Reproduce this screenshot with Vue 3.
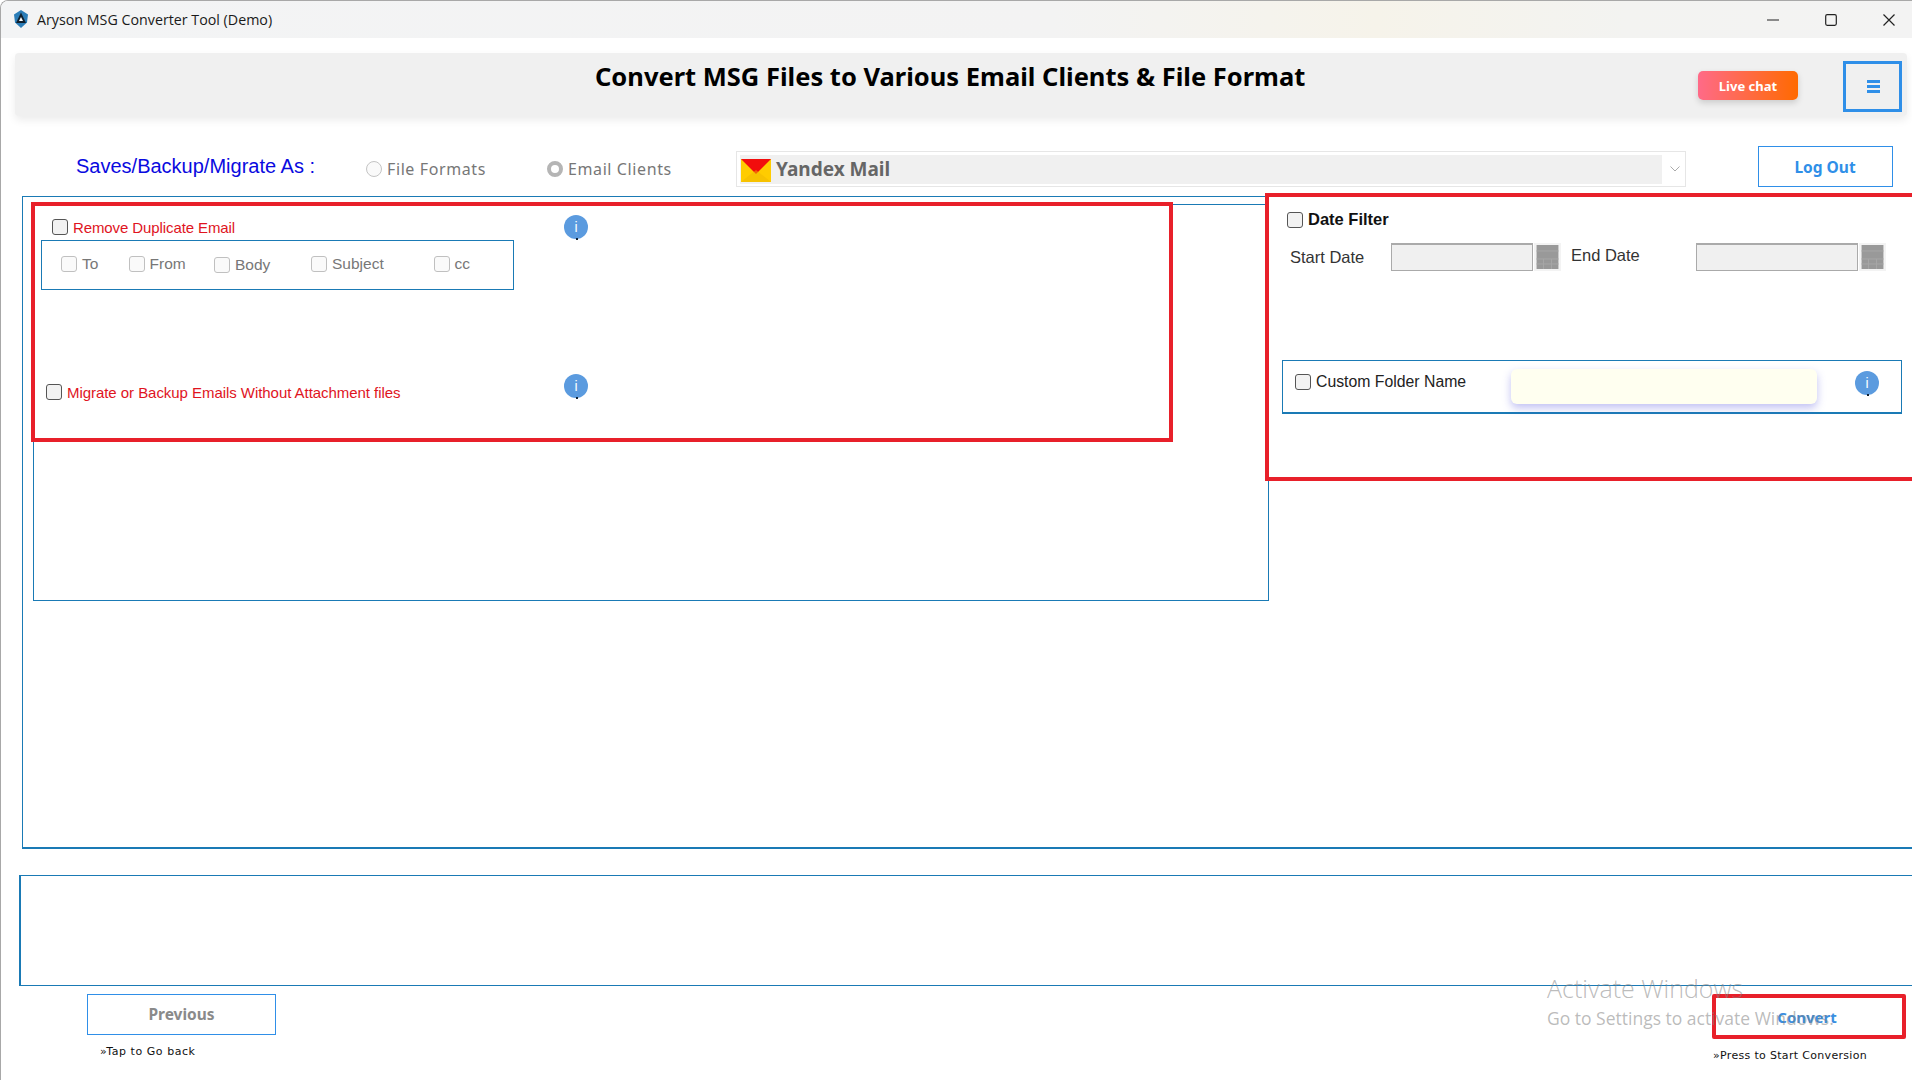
<template>
  <div class="window">
    <!-- title bar -->
    <div class="titlebar">
      <svg class="app-logo" viewBox="0 0 16 18">
        <path d="M8 0l7 4.500-1 8L8 18l-6-5.500-1-8z" fill="#2b7db8" />
        <path d="M8 2.500L13 13H3z" fill="#10202e" />
        <path d="M8 7l2 4H6z" fill="#fff" />
      </svg>
      <span class="app-title">Aryson MSG Converter Tool (Demo)</span>
      <div class="win-controls">
        <svg viewBox="0 0 12 12" class="win-icon"><path d="M0 6h12" /></svg>
        <svg viewBox="0 0 12 12" class="win-icon"><rect x="0.700" y="0.700" width="10.600" height="10.600" rx="1.500" /></svg>
        <svg viewBox="0 0 12 12" class="win-icon"><path d="M0.500 0.500l11 11M11.500 0.500l-11 11" /></svg>
      </div>
    </div>

    <!-- heading card -->
    <div class="head-card">
      <h1 class="head-title">Convert MSG Files to Various Email Clients &amp; File Format</h1>
      <button class="live-chat">Live chat</button>
      <button class="menu-btn">
        <svg viewBox="0 0 13 13" width="13" height="13">
          <path d="M0 0h13v3H0zM0 5h13v3H0zM0 10h13v3H0z" fill="#2f8fe8" />
        </svg>
      </button>
    </div>

    <!-- output type -->
    <div class="saves-row">
      <span class="saves-label">Saves/Backup/Migrate As :</span>
      <label class="radio-item radio-item--files"><input type="radio" name="kind" disabled />File Formats</label>
      <label class="radio-item radio-item--clients"><input type="radio" name="kind" checked disabled />Email Clients</label>
      <div class="client-select">
        <div class="client-select__value">
          <svg class="yandex-icon" viewBox="0 0 30 23">
            <rect width="30" height="23" fill="#ffcc00" />
            <path d="M0 0h30L15 15z" fill="#f20d0d" />
            <path d="M0 23l15-12 15 12z" fill="#f0b800" opacity="0.500" />
          </svg>
          <span>Yandex Mail</span>
        </div>
        <svg class="chevron" viewBox="0 0 10 6"><path d="M0.500 0.500L5 5l4.500-4.500" /></svg>
      </div>
      <button class="outline-btn logout-btn">Log Out</button>
    </div>

    <!-- options -->
    <div class="main-box">
      <div class="left-panel">
        <div class="opt-row">
          <label class="opt-label opt-label--dup"><input type="checkbox" class="check" />Remove Duplicate Email</label>
          <span class="info-dot">i</span>
        </div>
        <div class="dup-fields">
          <label v-for="f in dupFields" :key="f" class="dup-field" :class="{ 'dup-field--low': f === 'Body' }">
            <input type="checkbox" class="check check--off" disabled />{{ f }}
          </label>
        </div>
        <div class="opt-row opt-row--attach">
          <label class="opt-label opt-label--attach"><input type="checkbox" class="check" />Migrate or Backup Emails Without Attachment files</label>
          <span class="info-dot">i</span>
        </div>
      </div>

      <div class="right-panel">
        <label class="date-filter"><input type="checkbox" class="check" />Date Filter</label>
        <div class="date-row">
          <span class="date-label date-label--start">Start Date</span>
          <div class="date-input date-input--start"></div>
          <span class="cal-btn">
            <svg viewBox="0 0 22 24"><rect width="22" height="24" fill="#999" /><path d="M0 6h22M0 14h22M0 19h22M7 14v10M15 14v10" stroke="#a6a6a6" /></svg>
          </span>
          <span class="date-label date-label--end">End Date</span>
          <div class="date-input date-input--end"></div>
          <span class="cal-btn">
            <svg viewBox="0 0 22 24"><rect width="22" height="24" fill="#999" /><path d="M0 6h22M0 14h22M0 19h22M7 14v10M15 14v10" stroke="#a6a6a6" /></svg>
          </span>
        </div>
        <div class="custom-box">
          <label class="custom-label"><input type="checkbox" class="check" />Custom Folder Name</label>
          <div class="custom-input"></div>
          <span class="info-dot">i</span>
        </div>
      </div>

      <!-- red highlights drawn over the panels -->
      <div class="mark mark--left"></div>
      <div class="mark mark--right"></div>
    </div>

    <div class="log-box"></div>

    <div class="bottom-row">
      <div class="bottom-left">
        <button class="outline-btn prev-btn">Previous</button>
        <p class="hint hint--back">»Tap to Go back</p>
      </div>
      <div class="bottom-right">
        <button class="convert-btn">Convert</button>
        <p class="hint hint--start">»Press to Start Conversion</p>
      </div>
    </div>

    <div class="activate">
      <div class="activate__big">Activate Windows</div>
      <div class="activate__small">Go to Settings to activate Windows.</div>
    </div>
  </div>
</template>

<script setup>
const dupFields = ['To', 'From', 'Body', 'Subject', 'cc']
</script>

<style>
html,
body {
  margin: 0;
  background: #fff;
  overflow: hidden;
}
</style>

<style scoped>
.window {
  position: relative;
  width: 1912px;
  height: 1080px;
  box-sizing: border-box;
  border-left: 1px solid #a8a8a8;
  border-top: 1px solid #a8a8a8;
  border-top-left-radius: 8px;
  background: #fff;
  overflow: hidden;
  display: flex;
  flex-direction: column;
  font-family: "Liberation Sans", Arial, sans-serif;
}

/* ---- title bar ---- */
.titlebar {
  flex: none;
  height: 37px;
  display: flex;
  align-items: center;
  padding-left: 12px;
  background: linear-gradient(90deg, #f3f4f5 0%, #f3f3f3 55%, #f6f3ea 72%, #f3f3f1 85%, #f3f3f3 100%);
}

.app-logo {
  width: 16px;
  height: 18px;
  margin-top: -1px;
}

.app-title {
  margin-left: 8px;
  font-family: "Open Sans", sans-serif;
  font-size: 14.250px;
  color: #1a1a1a;
}

.win-controls {
  margin-left: auto;
  margin-right: 17px;
  display: flex;
  gap: 46px;
}

.win-icon {
  width: 12px;
  height: 12px;
  fill: none;
  stroke: #222;
  stroke-width: 1.200;
}

/* ---- heading card ---- */
.head-card {
  flex: none;
  height: 63px;
  margin: 15px 5px 0 14px;
  padding-right: 5px;
  display: flex;
  align-items: flex-start;
  background: #f0f0f0;
  border-radius: 4px;
  box-shadow: 0 4px 8px rgba(0, 0, 0, 0.08);
}

.head-title {
  margin: 4px 0 0 580px;
  font-family: "Noto Sans", sans-serif;
  font-size: 25.500px;
  line-height: 38px;
  font-weight: 700;
  color: #000;
  white-space: nowrap;
}

.live-chat {
  width: 100px;
  height: 29px;
  margin: 18px 0 0 auto;
  border: none;
  border-radius: 5px;
  background: linear-gradient(90deg, #ff6a88, #ff6a00);
  box-shadow: 0 3px 6px rgba(0, 0, 0, 0.15);
  color: #fff;
  font-family: "Noto Sans", sans-serif;
  font-size: 13px;
  font-weight: 700;
  padding: 0;
}

.menu-btn {
  width: 59px;
  height: 51px;
  margin: 8px 0 0 45px;
  padding: 0 0 0 2px;
  box-sizing: border-box;
  border: 3px solid #2f8fe8;
  background: transparent;
  display: flex;
  align-items: center;
  justify-content: center;
}

/* ---- output type row ---- */
.saves-row {
  flex: none;
  height: 41px;
  margin-top: 30px;
  display: flex;
  align-items: center;
}

.saves-label {
  margin: 0 0 0 75px;
  width: 290px;
  flex: none;
  font-size: 20px;
  color: #0a0ae0;
}

.radio-item {
  display: flex;
  align-items: center;
  font-family: "Noto Sans", sans-serif;
  font-size: 16px;
  letter-spacing: 0.600px;
  color: #777;
  margin-top: 5px;
}

.radio-item input {
  appearance: none;
  width: 16px;
  height: 16px;
  margin: 0 5px 0 0;
  border-radius: 50%;
  border: 1px solid #c4c4c4;
  background: #fafafa;
}

.radio-item input:checked {
  border: 4px solid #b5b5b5;
  background: #fff;
}

.radio-item--files {
  width: 181px;
  flex: none;
}

.radio-item--clients {
  width: 189px;
  flex: none;
}

.client-select {
  width: 949.500px;
  height: 36px;
  margin-top: 5px;
  flex: none;
  box-sizing: border-box;
  padding: 3px 0 3px 3px;
  border: 1px solid #e6e6e6;
  display: flex;
  align-items: center;
}

.client-select__value {
  width: 921.500px;
  height: 29px;
  flex: none;
  display: flex;
  align-items: center;
  background: #f0f0f0;
  font-family: "Noto Sans", sans-serif;
  font-size: 19px;
  font-weight: 700;
  color: #666;
}

.yandex-icon {
  width: 30px;
  height: 23px;
  margin: 2px 5px 0 1px;
}

.chevron {
  width: 10px;
  height: 6px;
  margin-left: 8px;
  fill: none;
  stroke: #aaa;
}

.outline-btn {
  box-sizing: border-box;
  background: #fff;
  border: 1.500px solid #2f8fe8;
  font-family: "Noto Sans", sans-serif;
  font-weight: 700;
  padding: 0;
}

.logout-btn {
  width: 135px;
  height: 41px;
  margin-left: 72px;
  font-size: 15.500px;
  color: #2f8fe8;
}

/* ---- main options box ---- */
.main-box {
  position: relative;
  flex: none;
  height: 653px;
  margin: 9px 0 0 21px;
  box-sizing: border-box;
  border-left: 1px solid #1a7ab5;
  border-top: 1px solid #1a7ab5;
  border-bottom: 2px solid #1a7ab5;
  display: flex;
  align-items: flex-start;
}

.left-panel {
  flex: none;
  width: 1236px;
  height: 397px;
  margin: 7px 0 0 10px;
  box-sizing: border-box;
  border: 1px solid #1a7ab5;
  padding-top: 10px;
}

.check {
  appearance: none;
  flex: none;
  width: 16px;
  height: 16px;
  margin: 0 5px 0 0;
  box-sizing: border-box;
  border: 1px solid #555;
  border-radius: 3px;
  background: #f2f2f2;
}

.check--off {
  border-color: #c0c0c0;
  background: #fafafa;
}

.opt-row {
  display: flex;
  align-items: flex-start;
  margin-left: 18px;
}

.opt-row--attach {
  margin: 84px 0 0 12px;
}

.opt-label {
  display: flex;
  align-items: center;
  font-size: 15px;
  color: #e0141e;
  flex: none;
}

.opt-label--dup {
  width: 512px;
  height: 24px;
  letter-spacing: -0.100px;
}

.opt-label--attach {
  width: 518px;
  height: 18px;
  margin-top: 9px;
  letter-spacing: -0.050px;
}

.info-dot {
  position: relative;
  flex: none;
  width: 24px;
  height: 24px;
  border-radius: 50%;
  background: #5b9bdf;
  color: #fff;
  font-size: 14px;
  line-height: 24px;
  text-align: center;
}

.info-dot::after {
  content: "";
  position: absolute;
  left: 12px;
  bottom: -1px;
  width: 2px;
  height: 2px;
  background: #123;
}

.dup-fields {
  width: 473px;
  height: 50px;
  margin: 1px 0 0 7px;
  box-sizing: border-box;
  border: 1px solid #1a7ab5;
  padding-left: 19px;
  display: grid;
  grid-template-columns: 67.500px 85.500px 97px 122.500px auto;
  align-items: start;
}

.dup-field {
  display: flex;
  align-items: center;
  margin-top: 14px;
  font-size: 15.500px;
  color: #777;
}

.dup-field--low {
  margin-top: 15px;
}

.right-panel {
  flex: none;
  width: 643px;
  padding-left: 13px;
  box-sizing: border-box;
}

.date-filter {
  display: flex;
  align-items: center;
  margin: 13px 0 0 5px;
  font-size: 16.500px;
  font-weight: 700;
  color: #111;
}

.date-row {
  display: flex;
  align-items: center;
  margin: 14px 0 0 8px;
  height: 28px;
}

.date-label {
  flex: none;
  font-size: 16.500px;
  color: #333;
}

.date-label--start {
  width: 101px;
}

.date-label--end {
  width: 125px;
  margin-left: 12px;
  margin-top: -4px;
}

.date-input {
  flex: none;
  height: 28px;
  box-sizing: border-box;
  background: #f0f0f0;
  border: 1px solid #aaa;
  border-top-width: 2px;
}

.date-input--start {
  width: 142px;
}

.date-input--end {
  width: 161.500px;
}

.cal-btn {
  flex: none;
  width: 23px;
  height: 24px;
  margin-left: 3px;
  display: block;
  outline: 2px solid #f3f3f3;
}

.cal-btn svg {
  display: block;
  width: 100%;
  height: 100%;
}

.custom-box {
  width: 620px;
  height: 54px;
  margin-top: 89px;
  box-sizing: border-box;
  border: 1px solid #1a7ab5;
  border-bottom-width: 2px;
  padding-left: 12px;
  display: flex;
  align-items: flex-start;
}

.custom-label {
  flex: none;
  width: 216px;
  height: 16px;
  margin-top: 13px;
  display: flex;
  align-items: center;
  font-size: 15.800px;
  color: #222;
}

.custom-input {
  flex: none;
  width: 306px;
  height: 35px;
  margin-top: 8px;
  border-radius: 6px;
  background: #fffff0;
  box-shadow: 0 4px 8px rgba(100, 100, 225, 0.4);
}

.custom-box .info-dot {
  margin: 10px 0 0 38px;
}

/* red highlight frames */
.mark {
  position: absolute;
  box-sizing: border-box;
  border: 4px solid #e8202a;
  pointer-events: none;
}

.mark--left {
  left: 8px;
  top: 5px;
  width: 1142px;
  height: 240px;
}

.mark--right {
  left: 1242px;
  top: -4px;
  width: 660px;
  height: 288px;
}

/* ---- log + footer ---- */
.log-box {
  flex: none;
  height: 111px;
  margin: 26px 0 0 17.500px;
  box-sizing: border-box;
  border: 1px solid #1a7ab5;
  border-left-width: 2px;
  border-right: none;
}

.bottom-row {
  flex: none;
  margin-top: 8px;
  display: flex;
  justify-content: space-between;
  align-items: flex-start;
}

.bottom-left {
  margin-left: 86px;
}

.prev-btn {
  display: block;
  width: 189px;
  height: 41px;
  padding-bottom: 2px;
  font-size: 15.500px;
  color: #8a8a8a;
}

.hint {
  margin: 0;
  font-family: "DejaVu Sans", sans-serif;
  font-size: 11px;
  color: #111;
}

.hint--back {
  margin: 10px 0 0 13px;
  letter-spacing: 0.550px;
}

.bottom-right {
  margin-right: 6px;
}

.convert-btn {
  display: block;
  width: 194px;
  height: 45px;
  box-sizing: border-box;
  background: transparent;
  border: 4px solid #e8202a;
  border-radius: 2px;
  font-family: "Noto Sans", sans-serif;
  font-size: 15px;
  font-weight: 700;
  color: #3a8ee0;
  padding: 0 4px 0 0;
}

.hint--start {
  margin: 10px 0 0 1px;
  letter-spacing: 0.320px;
}

/* windows watermark, sits over everything */
.activate {
  position: absolute;
  left: 1546px;
  top: 971px;
  pointer-events: none;
  font-family: "Open Sans", sans-serif;
  color: rgba(130, 130, 130, 0.55);
  white-space: nowrap;
}

.activate__big {
  font-size: 25px;
  font-weight: 300;
  line-height: 32px;
}

.activate__small {
  font-size: 17.500px;
  margin-top: 2px;
  line-height: 24px;
}
</style>
